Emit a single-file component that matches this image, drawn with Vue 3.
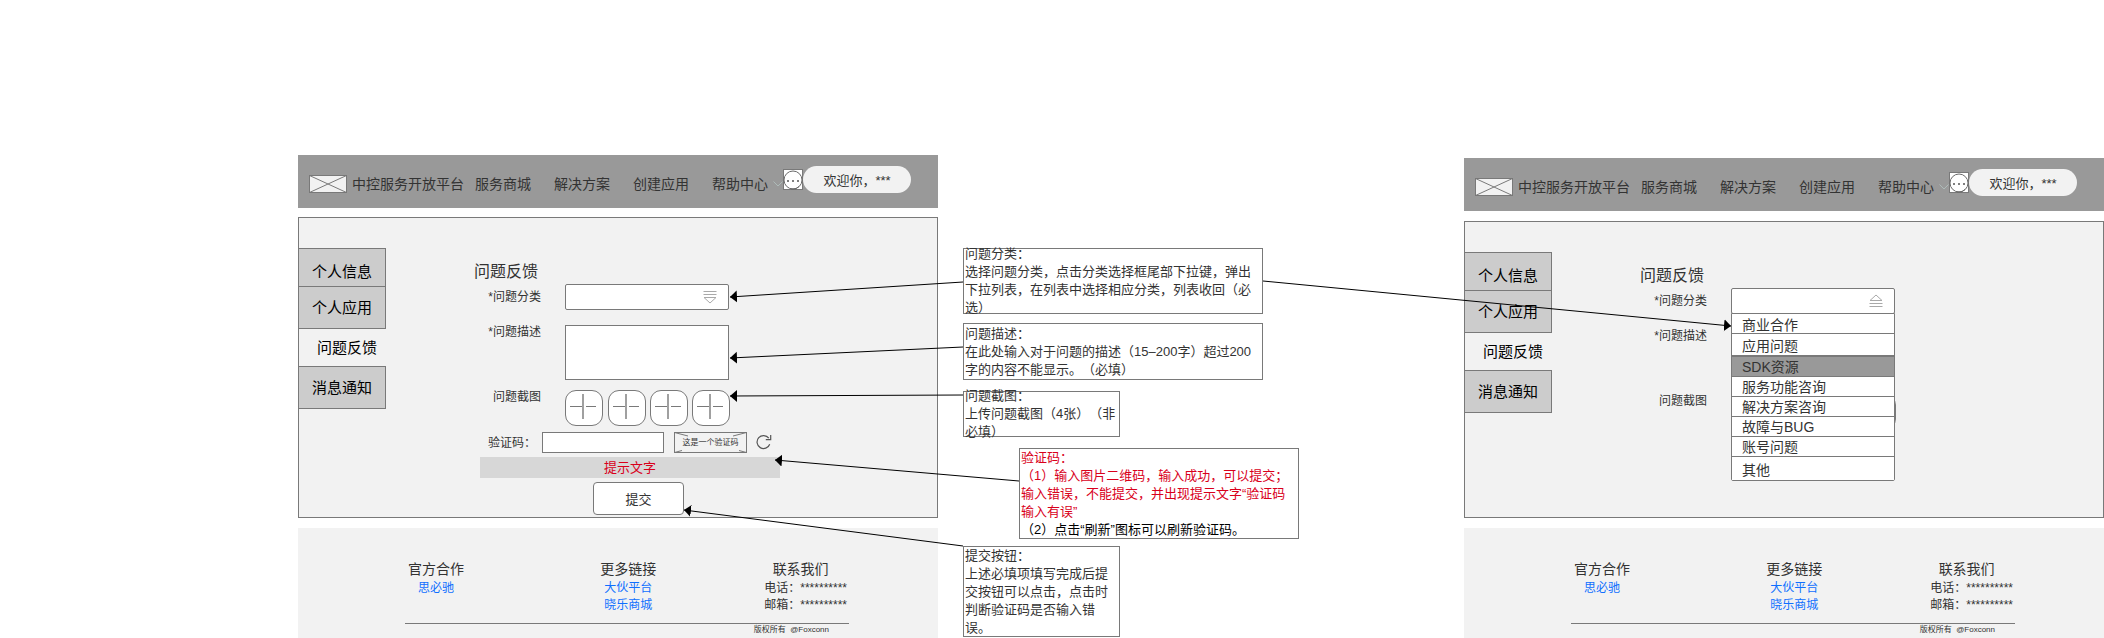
<script setup>
const navItems = ['服务商城', '解决方案', '创建应用', '帮助中心']
const sideItems = ['个人信息', '个人应用', '问题反馈', '消息通知']
const categories = ['商业合作', '应用问题', 'SDK资源', '服务功能咨询', '解决方案咨询', '故障与BUG', '账号问题', '其他']
const activeCategory = 'SDK资源'

const frames = [
  { id: 'closed', open: false },
  { id: 'open', open: true },
]

const notes = [
  { id: 'category', lines: ['问题分类：', '选择问题分类，点击分类选择框尾部下拉键，弹出下拉列表，在列表中选择相应分类，列表收回（必选）'] },
  { id: 'detail', lines: ['问题描述：', '在此处输入对于问题的描述（15–200字）超过200字的内容不能显示。（必填）'] },
  { id: 'shots', lines: ['问题截图：', '上传问题截图（4张）（非必填）'] },
  { id: 'captcha', lines: ['验证码：', '（1）输入图片二维码，输入成功，可以提交；输入错误，不能提交，并出现提示文字“验证码输入有误”'], last: '（2）点击“刷新”图标可以刷新验证码。' },
  { id: 'submit', lines: ['提交按钮：', '上述必填项填写完成后提交按钮可以点击，点击时判断验证码是否输入错误。'] },
]

const arrows = [
  'M963 282 L730 297',
  'M963 347 L730 358',
  'M963 395 L730 396',
  'M1019 481 L775 460',
  'M963 546 L684 510',
  'M1263 281 L1731 326',
]
</script>

<template>
  <main class="board">
    <div v-for="f in frames" :key="f.id" class="frame" :class="f.id">
      <header class="topbar">
        <svg class="logo" width="38" height="18" viewBox="0 0 38 18">
          <rect x=".5" y=".5" width="37" height="17" fill="#f2f2f2" stroke="#797979" />
          <path d="M.5 .5L37.5 17.5M37.5 .5L.5 17.5" stroke="#797979" fill="none" />
        </svg>
        <span class="brand">中控服务开放平台</span>
        <nav class="nav">
          <a v-for="n in navItems" :key="n" href="#">{{ n }}</a>
        </nav>
        <svg class="chevron" width="10" height="6" viewBox="0 0 10 6">
          <path d="M.5 .5L5 5L9.500 .5" stroke="#aebbb9" fill="none" />
        </svg>
        <svg class="message" width="20" height="21" viewBox="0 0 20 21">
          <rect x=".5" y=".5" width="19" height="20" fill="#fff" stroke="#797979" />
          <circle cx="10" cy="11" r="9" fill="#fff" stroke="#6a6a6a" />
          <path d="M8 20Q13 21 16 17.500" fill="none" stroke="#6a6a6a" />
          <g fill="#555"><circle cx="5" cy="12" r="1" /><circle cx="10" cy="12" r="1" /><circle cx="15" cy="12" r="1" /></g>
        </svg>
        <button type="button" class="welcome">欢迎你，***</button>
      </header>

      <section class="panel">
        <nav class="side">
          <a v-for="(s, i) in sideItems" :key="s" href="#" :class="['side-item', 'item-' + i]">{{ s }}</a>
        </nav>
        <form class="form" @submit.prevent>
          <h2>问题反馈</h2>
          <div class="row row-select">
            <label :for="'cat-' + f.id">*问题分类</label>
            <div class="field">
              <select :id="'cat-' + f.id"><option></option></select>
              <svg class="handle" width="14" height="14" viewBox="0 0 14 14" fill="none" stroke="#a9a9a9">
                <path v-if="!f.open" d="M.5 1.500H13.500M.5 4.500H13.500M1 7.500H13L7 13Z" />
                <path v-else d="M.5 12.500H13.500M.5 9.500H13.500M1 6.500H13L7 1Z" />
              </svg>
              <ul v-if="f.open" class="menu">
                <li v-for="c in categories" :key="c">
                  <button type="button" :class="{ active: c === activeCategory }">{{ c }}</button>
                </li>
              </ul>
            </div>
          </div>
          <div class="row row-text">
            <label :for="'text-' + f.id">*问题描述</label>
            <textarea :id="'text-' + f.id"></textarea>
          </div>
          <div class="row row-shots">
            <span class="label">问题截图</span>
            <div class="shots">
              <button v-for="n in 4" :key="n" type="button" class="shot" :aria-label="'上传截图' + n">
                <svg width="26" height="26" viewBox="0 0 26 26" fill="none">
                  <path d="M13 0V25" stroke="#a0a0a0" stroke-width="2" />
                  <path d="M0 12.500H12M16 12.500H26" stroke="#797979" />
                </svg>
              </button>
            </div>
          </div>
          <template v-if="!f.open">
            <div class="row row-captcha">
              <label for="captcha">验证码：</label>
              <input id="captcha" type="text">
              <div class="captcha">
                <svg width="73" height="21" viewBox="0 0 73 21" fill="none" stroke="#797979">
                  <rect x=".5" y=".5" width="72" height="20" fill="#f2f2f2" />
                  <path d="M.5 .5L14 4M72.500 .5L59 4M.5 20.500L8 18.500M72.500 20.500L65 18.500" />
                </svg>
                <span>这是一个验证码</span>
              </div>
              <button type="button" class="refresh" aria-label="刷新">
                <svg width="16" height="16" viewBox="0 0 16 16" fill="none" stroke="#555" stroke-width="1.200">
                  <path d="M13.700 10.200A6.500 6.500 0 1 1 12.800 4.200M14.700 1V5.600H9.800" />
                </svg>
              </button>
            </div>
            <p class="hint">提示文字</p>
            <button type="submit" class="submit">提交</button>
          </template>
        </form>
      </section>

      <footer class="footer">
        <div class="cols">
          <div class="col">
            <h3>官方合作</h3>
            <a href="#">思必驰</a>
          </div>
          <div class="col">
            <h3>更多链接</h3>
            <a href="#">大伙平台</a>
            <a href="#">晓乐商城</a>
          </div>
          <div class="col">
            <h3>联系我们</h3>
            <span>电话：**********</span>
            <span>邮箱：**********</span>
          </div>
        </div>
        <p class="copyright">版权所有 &nbsp;@Foxconn</p>
      </footer>
    </div>

    <aside class="notes">
      <div v-for="n in notes" :key="n.id" class="note" :class="'note-' + n.id">
        <p v-for="l in n.lines" :key="l">{{ l }}</p>
        <p v-if="n.last" class="last">{{ n.last }}</p>
      </div>
    </aside>

    <svg class="arrows" viewBox="0 0 2104 638" preserveAspectRatio="none">
      <defs>
        <marker id="head" markerUnits="userSpaceOnUse" markerWidth="8" markerHeight="14" refX="7" refY="6" orient="auto">
          <path d="M0 0L7 6L0 12Z" fill="#000" />
        </marker>
      </defs>
      <path v-for="a in arrows" :key="a" :d="a" stroke="#000" fill="none" marker-end="url(#head)" />
    </svg>
  </main>
</template>

<style>
body {
  margin: 0;
  background: #fff;
}
</style>

<style scoped>
* {
  box-sizing: border-box;
}
.board {
  position: relative;
  display: grid;
  grid-template-columns: 298fr minmax(0, 640fr) 526fr minmax(0, 640fr);
  font-family: "Liberation Sans", "Noto Sans CJK SC", sans-serif;
  font-size: 12px;
  color: #333;
  text-spacing-trim: space-all;
}
h2, h3, p, ul {
  margin: 0;
  padding: 0;
  font-weight: 400;
}
a {
  color: inherit;
  text-decoration: none;
}
button, input, select, textarea {
  font: inherit;
  color: inherit;
  margin: 0;
  padding: 0;
  border: 1px solid #797979;
  background: #fff;
  border-radius: 0;
  text-spacing-trim: inherit;
}
.arrows {
  position: absolute;
  inset: 0;
  width: 100%;
  height: 100%;
  pointer-events: none;
}

.frame {
  grid-row: 1;
  grid-column: 2;
  padding-top: 155px;
}
.frame.open {
  grid-column: 4;
  padding-top: 158px;
}
.topbar {
  display: flex;
  align-items: center;
  height: 53px;
  padding: 4px 27px 0 11px;
  background: #999;
  font-size: 14px;
  white-space: nowrap;
}
.topbar svg {
  flex: none;
}
.brand {
  margin-left: 5px;
}
.brand, .nav {
  padding-bottom: 2px;
}
.nav {
  display: flex;
  gap: 23px;
  margin-left: 11px;
}
.chevron {
  margin-left: 5px;
}
.message {
  margin: -8px 0 0 auto;
}
.welcome {
  width: 108px;
  height: 27px;
  margin-top: -8px;
  border: 0;
  border-radius: 14px;
  background: #f2f2f2;
  font-size: 13px;
}

.panel {
  display: flex;
  align-items: flex-start;
  min-height: 297px;
  margin-top: 9px;
  border: 1px solid #797979;
  background: #f2f2f2;
}
.open .panel {
  margin-top: 10px;
}
.side {
  display: flex;
  flex-direction: column;
  width: 87px;
  margin-top: 30px;
  font-size: 15px;
  color: #000;
}
.side-item {
  display: flex;
  align-items: center;
  height: 43px;
  padding: 0 0 2px 13px;
  border: 1px solid #797979;
  border-left: 0;
  background: #ccc;
}
.item-0 {
  height: 38px;
  padding-top: 8px;
  border-bottom: 0;
}
.item-2 {
  height: 37px;
  padding-left: 18px;
  border: 0;
  background: none;
}
.form {
  flex: 1;
  padding: 42px 0 2px;
}
h2 {
  padding-left: 88px;
  font-size: 16px;
  line-height: 24px;
}
.row {
  display: flex;
  align-items: flex-start;
  line-height: 14px;
}
.row label, .row .label {
  width: 155px;
  margin-right: 24px;
  text-align: right;
}
.row-select {
  align-items: center;
}
.field {
  position: relative;
  width: 164px;
  height: 26px;
}
select {
  display: block;
  width: 100%;
  height: 100%;
  appearance: none;
  border-radius: 2px;
}
.handle {
  position: absolute;
  top: 6px;
  right: 12px;
}
.menu {
  position: absolute;
  top: 25px;
  left: 0;
  right: 0;
  z-index: 1;
  list-style: none;
  border: 1px solid #797979;
  border-radius: 0 0 2px 2px;
  background: #fff;
  font-size: 14px;
}
.menu button {
  display: block;
  width: 100%;
  height: 20px;
  padding-left: 10px;
  border: 0;
  border-bottom: 1px solid #797979;
  line-height: 20px;
  text-align: left;
}
.menu li:first-child button {
  padding-top: 4px;
  line-height: 15px;
}
.menu li:nth-child(2) button {
  height: 23px;
  padding-top: 3px;
  border-bottom-width: 2px;
  line-height: 18px;
}
.menu li:last-child button {
  height: 23px;
  padding-top: 3px;
  border-bottom: 0;
}
.menu button.active {
  background: #999;
}
.row-text {
  margin-top: 15px;
}
textarea {
  display: block;
  width: 164px;
  height: 55px;
  resize: none;
}
.row-shots {
  margin-top: 10px;
}
.shots {
  display: flex;
  gap: 4px;
}
.shot {
  display: flex;
  align-items: center;
  justify-content: center;
  width: 38px;
  height: 36px;
  padding: 0 2px 2px 0;
  border-radius: 11px;
}
.shot:first-child {
  margin-right: 1px;
}
.row-captcha {
  align-items: center;
  height: 21px;
  margin: 6px 0 4px;
  padding-left: 102px;
}
.row-captcha label {
  width: 48px;
  margin-right: 6px;
  text-align: left;
}
.row-captcha input {
  width: 122px;
  height: 21px;
}
.captcha {
  display: grid;
  place-items: center;
  margin-left: 10px;
  font-size: 8px;
}
.captcha > * {
  display: block;
  grid-area: 1 / 1;
}
.refresh {
  width: 16px;
  height: 16px;
  margin: 0 0 2px 9px;
  border: 0;
  background: none;
}
.refresh svg {
  display: block;
}
.hint {
  width: 300px;
  margin-left: 94px;
  background: #d7d7d7;
  color: #d9001b;
  font-size: 13px;
  line-height: 21px;
  text-align: center;
}
.submit {
  display: block;
  width: 91px;
  height: 33px;
  margin: 4px 0 0 207px;
  border-radius: 4px;
  font-size: 13px;
}

.footer {
  height: 110px;
  margin-top: 10px;
  padding: 31px 89px 0 107px;
  background: #f2f2f2;
}
.cols {
  display: flex;
  justify-content: space-between;
  height: 65px;
  padding: 0 2px;
  border-bottom: 1px solid #797979;
}
.col {
  display: flex;
  flex-direction: column;
  align-items: center;
  line-height: 17px;
}
.col:first-child {
  margin-left: 1px;
}
.col:nth-child(2) {
  margin-left: 28px;
}
.col:last-child h3 {
  padding-right: 10px;
}
h3 {
  margin-bottom: 1px;
  font-size: 14px;
  line-height: 20px;
}
.col a {
  color: #0f6fff;
}
.copyright {
  padding-right: 20px;
  font-size: 8px;
  line-height: 12px;
  text-align: right;
}

.notes {
  grid-row: 1;
  grid-column: 3;
  display: flex;
  flex-direction: column;
  align-items: flex-start;
  padding: 248px 0 0 25px;
  font-size: 13px;
  line-height: 18px;
}
.note {
  display: flex;
  flex-direction: column;
  justify-content: center;
  width: 157px;
  height: 91px;
  padding: 0 2px 0 1px;
  border: 1px solid #797979;
}
.note-category {
  width: 300px;
  height: 66px;
}
.note-detail {
  width: 300px;
  height: 57px;
  margin-top: 9px;
}
.note-shots {
  height: 46px;
  margin-top: 11px;
}
.note-captcha {
  width: 280px;
  margin: 11px 0 7px 56px;
  color: #d9001b;
}
.note-captcha .last {
  color: #000;
}
</style>
